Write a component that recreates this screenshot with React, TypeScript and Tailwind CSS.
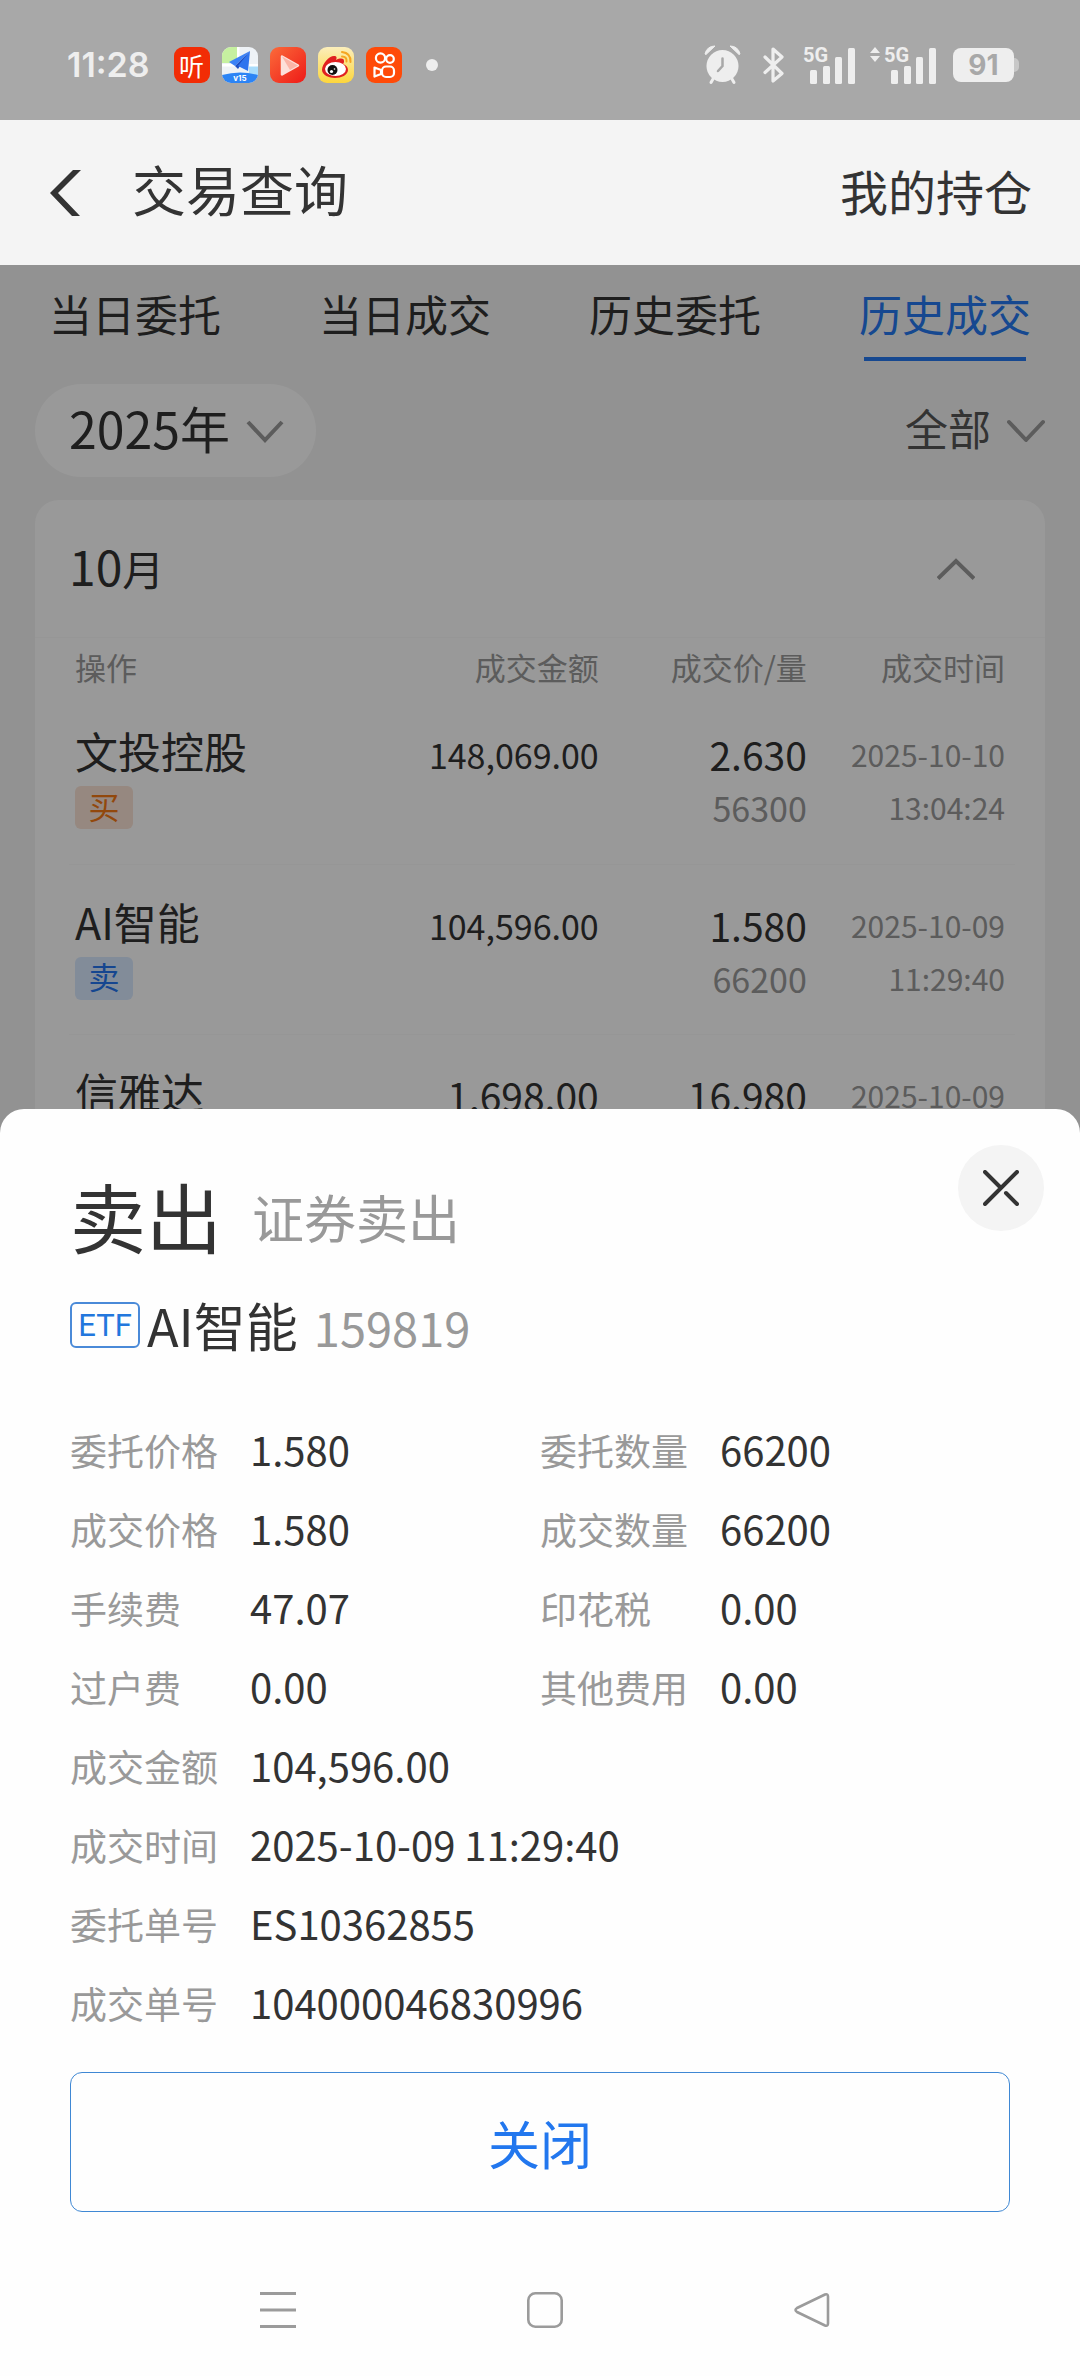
import { useState } from 'react'
import type { ReactNode } from 'react'

interface ITrade {
  id: number
  name: string
  side: 'buy' | 'sell'
  amount: string
  largeAmount?: boolean
  price: string
  quantity: string
  date: string
  time: string
}

interface IDetail {
  label: string
  value: string
  wide?: boolean
}

const TABS = ['当日委托', '当日成交', '历史委托', '历史成交']

const TRADES: ITrade[] = [
  {
    id: 1,
    name: '文投控股',
    side: 'buy',
    amount: '148,069.00',
    price: '2.630',
    quantity: '56300',
    date: '2025-10-10',
    time: '13:04:24',
  },
  {
    id: 2,
    name: 'AI智能',
    side: 'sell',
    amount: '104,596.00',
    price: '1.580',
    quantity: '66200',
    date: '2025-10-09',
    time: '11:29:40',
  },
  {
    id: 3,
    name: '信雅达',
    side: 'sell',
    amount: '1,698.00',
    largeAmount: true,
    price: '16.980',
    quantity: '100',
    date: '2025-10-09',
    time: '11:29:40',
  },
]

const DETAILS: IDetail[] = [
  { label: '委托价格', value: '1.580' },
  { label: '委托数量', value: '66200' },
  { label: '成交价格', value: '1.580' },
  { label: '成交数量', value: '66200' },
  { label: '手续费', value: '47.07' },
  { label: '印花税', value: '0.00' },
  { label: '过户费', value: '0.00' },
  { label: '其他费用', value: '0.00' },
  { label: '成交金额', value: '104,596.00', wide: true },
  { label: '成交时间', value: '2025-10-09 11:29:40', wide: true },
  { label: '委托单号', value: 'ES10362855', wide: true },
  { label: '成交单号', value: '104000046830996', wide: true },
]

// status bar
function AppIcons() {
  return (
    <div className="flex gap-3">
      <span className="flex h-9 w-9 items-center justify-center rounded-[9px] bg-[#f22c05] text-[25px] leading-9 text-white">
        听
      </span>
      <svg className="h-9 w-9 rounded-[9px]" viewBox="0 0 36 36" aria-hidden="true">
        <rect width="36" height="36" fill="#eef2f6" />
        <path d="M0 0h15v16H0z" fill="#c6f0a0" />
        <path d="M27 19h9v10h-9z" fill="#a9dcfb" />
        <path d="M15 0h2.500v17H36v2.500H0V17h15z" fill="#fff" />
        <path d="M28 4 7 15l6 4z" fill="#3b82f6" />
        <path d="M28 4 13 19l3 3z" fill="#1d4fc4" />
        <path d="M28 4 16 19l10 5z" fill="#2f74ee" />
        <path d="M0 28q18-5 36 0v8H0z" fill="#2c84f5" />
        <text x="18" y="34" textAnchor="middle" fontSize="8" fontWeight="700" fill="#fff" fontFamily="Inter, sans-serif">
          v15
        </text>
      </svg>
      <svg className="h-9 w-9 rounded-[9px]" viewBox="0 0 36 36" aria-hidden="true">
        <defs>
          <linearGradient id="play-bg" x1="0" y1="0" x2="1" y2="1">
            <stop offset="0" stopColor="#fb6b3a" />
            <stop offset="1" stopColor="#ee1a18" />
          </linearGradient>
        </defs>
        <rect width="36" height="36" fill="url(#play-bg)" />
        <path d="M12 9.500 28 18.500 12 27.500z" fill="#fde0da" stroke="#fde0da" strokeWidth="2.500" strokeLinejoin="round" />
        <path d="M12 9.500 28 18.500 20 23z" fill="#fbb5a8" />
      </svg>
      <svg className="h-9 w-9 rounded-[9px]" viewBox="0 0 36 36" aria-hidden="true">
        <defs>
          <linearGradient id="weibo-bg" x1="0" y1="0" x2="0" y2="1">
            <stop offset="0" stopColor="#fbeebb" />
            <stop offset="1" stopColor="#fdd63c" />
          </linearGradient>
        </defs>
        <rect width="36" height="36" fill="url(#weibo-bg)" />
        <path
          d="M4 23C4 17 11 9 16 9c3 0 3 2 2 4 4-2 8-2 8 1 0 1 0 2-1 3 3 1 5 3 5 6 0 5-7 8-13 8S4 28 4 23z"
          fill="#e02020"
        />
        <ellipse cx="17.500" cy="22" rx="10.500" ry="7" fill="#fff" />
        <circle cx="14.500" cy="23" r="5" fill="#111" />
        <circle cx="13.500" cy="24.500" r="1.600" fill="#fff" />
        <circle cx="16.500" cy="22" r=".8" fill="#fff" />
        <path d="M24 5q9 1 8.500 10M24 9.500q5 0 4.500 5" fill="none" stroke="#f5a623" strokeWidth="2" strokeLinecap="round" />
      </svg>
      <svg className="h-9 w-9 rounded-[9px]" viewBox="0 0 36 36" aria-hidden="true">
        <rect width="36" height="36" fill="#ff4a08" />
        <g fill="none" stroke="#fff" strokeWidth="2.200" strokeLinejoin="round">
          <circle cx="14.500" cy="11" r="4.600" />
          <circle cx="24" cy="12" r="3.800" />
          <rect x="16" y="19.500" width="12" height="10.500" rx="4" />
          <path d="M8.500 20.500 15 23v4l-6.500 2.500z" />
        </g>
      </svg>
    </div>
  )
}

function Signal({ active = false }: { active?: boolean }) {
  return (
    <svg
      className={active ? 'h-[38px] w-[67px] overflow-visible' : 'h-[38px] w-[53px] overflow-visible'}
      viewBox={active ? '0 0 67 38' : '12 0 53 38'}
      fill="#eee"
      aria-hidden="true"
    >
      {active && <path d="M5 1 10 7H0zM5 16l5-6H0z" />}
      <text x="14" y="16" fontSize="20" fontWeight="700" fontFamily="Roboto, sans-serif">
        5G
      </text>
      <rect x="21" y="24" width="7" height="14" rx="1.500" />
      <rect x="34" y="20" width="7" height="18" rx="1.500" />
      <rect x="46" y="11" width="7" height="27" rx="1.500" />
      <rect x="59" y="2" width="7" height="36" rx="1.500" />
    </svg>
  )
}

function StatusBar() {
  return (
    <div className="flex h-[120px] items-center justify-between bg-[#a8a8a8] pt-[10px] pr-[61px] pl-[67px] text-[#eee]">
      <div className="flex items-center gap-6">
        <span className="font-[Inter,sans-serif] text-[34px] leading-9 font-semibold">11:28</span>
        <AppIcons />
        <span className="h-3 w-3 rounded-full bg-[#eee]" />
      </div>
      <div className="flex items-center gap-4">
        <svg className="h-10 w-[42px]" viewBox="0 0 42 40" aria-hidden="true">
          <circle cx="18.500" cy="21" r="16" fill="#eee" />
          <path d="M1 9Q3 1 11 1L2 9.500zM36 9Q34 1 26 1l9 8.500z" fill="#eee" stroke="#eee" strokeLinejoin="round" />
          <path d="m9 34-2 3.500M28 34l2 3.500" stroke="#eee" strokeWidth="3" strokeLinecap="round" />
          <path d="M18.500 13.500V21l-4.500 5" fill="none" stroke="#a8a8a8" strokeWidth="2.500" strokeLinecap="round" />
        </svg>
        <svg
          className="h-9 w-[23px]"
          viewBox="0 0 23 36"
          fill="none"
          stroke="#eee"
          strokeWidth="3.200"
          strokeLinejoin="round"
          strokeLinecap="round"
          aria-hidden="true"
        >
          <path d="M3 10 20 26.500 11 34V2l9 8L3 25.500" />
        </svg>
        <Signal />
        <Signal active />
        <div className="flex items-center">
          <span className="flex h-[34px] w-[61px] items-center justify-center rounded-lg bg-[#eee] font-[Inter,sans-serif] text-[28px] leading-[34px] font-bold text-[#a8a8a8]">
            91
          </span>
          <span className="h-[14px] w-[5px] rounded-r-full bg-[#c8c8c8]" />
        </div>
      </div>
    </div>
  )
}

// icons
function Chevron({ up = false, round = false }: { up?: boolean; round?: boolean }) {
  return (
    <svg
      className="pointer-events-none h-6 w-[38px]"
      viewBox="0 0 38 24"
      fill="none"
      stroke="#999"
      strokeWidth="4"
      strokeLinecap={round ? 'round' : 'butt'}
      strokeLinejoin={round ? 'round' : 'miter'}
      aria-hidden="true"
    >
      <path d={up ? 'M1 21.500 19 4l18 17.500' : 'M2 3 19 21 36 3'} />
    </svg>
  )
}

function Filter({ label, children }: { label: string; children: ReactNode }) {
  return (
    <label className="flex items-center gap-4">
      <span className="sr-only">{label}</span>
      {children}
    </label>
  )
}

function TradeTable({ records }: { records: ITrade[] }) {
  return (
    <table className="w-full table-fixed text-right">
      <thead>
        <tr className="h-14 text-[31px] leading-[50px] text-[#999]">
          <th className="w-[28%] pt-[2px] pl-[6px] text-left font-normal">操作</th>
          <th className="w-[28%] pt-[2px] font-normal">成交金额</th>
          <th className="w-[22%] pt-[2px] font-normal">成交价/量</th>
          <th className="w-[22%] pt-[2px] pr-[10px] font-normal">成交时间</th>
        </tr>
      </thead>
      <tbody>
        {records.map((trade) => (
          <tr key={trade.id} className="h-[170px] border-b border-[#fafafa] align-top leading-[53px]">
            <td className="pt-[30px] pl-[6px] text-left">
              <div className="text-[43px] whitespace-nowrap">{trade.name}</div>
              <span
                className={`mt-[9px] flex h-[43px] w-[58px] items-center justify-center rounded-md pb-1 text-[31px] leading-[38px] ${
                  trade.side === 'buy' ? 'bg-[#fbe3d5] text-[#f37814]' : 'bg-[#d9e9ff] text-[#2375f0]'
                }`}
              >
                {trade.side === 'buy' ? '买' : '卖'}
              </span>
            </td>
            <td className={`pt-[34px] ${trade.largeAmount ? 'text-[39px]' : 'text-[34px]'}`}>{trade.amount}</td>
            <td className="pt-[34px]">
              <div className="text-[39px]">{trade.price}</div>
              <div className="text-[34px] text-[#999]">{trade.quantity}</div>
            </td>
            <td className="pt-[34px] pr-[10px] text-[30px] text-[#999]">
              <div>{trade.date}</div>
              <div>{trade.time}</div>
            </td>
          </tr>
        ))}
      </tbody>
    </table>
  )
}

function DetailSheet({ onClose }: { onClose: () => void }) {
  return (
    <section
      role="dialog"
      aria-label="卖出"
      className="absolute inset-x-0 bottom-0 rounded-t-3xl bg-[#fefefe] text-[#333]"
    >
      <div className="flex items-start justify-between pt-9 pr-9 pl-[70px]">
        <div className="mt-8 flex items-center gap-[30px] leading-[76px]">
          <h2 className="text-[76px]">卖出</h2>
          <span className="pt-1 text-[52px] leading-[72px] text-[#999]">证券卖出</span>
        </div>
        <button
          type="button"
          aria-label="关闭详情"
          onClick={onClose}
          className="flex h-[86px] w-[86px] items-center justify-center rounded-full bg-[#f4f4f4]"
        >
          <svg className="h-9 w-9" viewBox="0 0 36 36" stroke="#333" strokeWidth="4" strokeLinecap="round" aria-hidden="true">
            <path d="M34 2 2 34M2 2l15 15M23 23l11 11" />
          </svg>
        </button>
      </div>

      <div className="px-[70px]">
        <div className="mt-10 flex h-16 items-center leading-[60px]">
          <span className="mr-[7px] flex h-[46px] w-[70px] items-center justify-center rounded-md border-2 border-[#4a8ad8] pt-[2px] font-[Roboto,sans-serif] text-[31px] text-[#2277dd]">
            ETF
          </span>
          <span className="mr-4 text-[52px]">AI智能</span>
          <span className="pt-1 text-[47px] text-[#999]">159819</span>
        </div>

        <dl className="mt-[53px] grid grid-cols-2">
          {DETAILS.map(({ label, value, wide }) => (
            <div key={label} className={`flex h-[79px] items-center ${wide ? 'col-span-2' : ''}`}>
              <dt className="w-[180px] pt-[2px] text-[37px] text-[#999]">{label}</dt>
              <dd className="pb-[2px] text-[40px]">{value}</dd>
            </div>
          ))}
        </dl>

        <button
          type="button"
          onClick={onClose}
          className="mt-[30px] h-[140px] w-full rounded-xl border border-[#3f88d4] pt-[2px] text-[52px] text-[#2277ee]"
        >
          关闭
        </button>
      </div>

      <nav className="flex items-center justify-between pt-20 pr-[250px] pb-12 pl-[260px]">
        <button type="button" aria-label="最近任务">
          <svg className="h-9 w-9" viewBox="0 0 36 36" stroke="#9b9b9b" strokeWidth="3" aria-hidden="true">
            <path d="M0 1.500h36M0 18h36M0 34.500h36" />
          </svg>
        </button>
        <button type="button" aria-label="主屏幕">
          <svg className="h-9 w-9" viewBox="0 0 36 36" fill="none" stroke="#9b9b9b" strokeWidth="2.600" aria-hidden="true">
            <rect x="1.300" y="1.300" width="33.400" height="33.400" rx="7" />
          </svg>
        </button>
        <button type="button" aria-label="返回上一页">
          <svg
            className="h-9 w-9"
            viewBox="0 0 36 36"
            fill="none"
            stroke="#9b9b9b"
            strokeWidth="2.600"
            strokeLinejoin="round"
            aria-hidden="true"
          >
            <path d="M31 2.500 3 16q-3 2 0 4l28 13.500q3 1 3-2V4.500q0-3-3-2z" />
          </svg>
        </button>
      </nav>
    </section>
  )
}

export default function App() {
  // State
  const [activeTab, setActiveTab] = useState('历史成交')
  const [isOpen, setIsOpen] = useState(true)

  // UI
  return (
    <div
      lang="zh-CN"
      className="relative flex min-h-screen flex-col bg-[#f4f4f4] font-['Noto_Sans_CJK_SC',sans-serif] text-[#333]"
    >
      <StatusBar />
      <header className="flex h-[145px] items-center justify-between pr-12 pl-[50px]">
        <div className="flex items-center gap-[50px]">
          <button type="button" aria-label="返回">
            <svg className="h-[46px] w-8" viewBox="0 0 32 46" fill="#333" aria-hidden="true">
              <path d="M0 23 23 0h8L8 23l22 23h-8z" />
            </svg>
          </button>
          <h1 className="pb-2 text-[54px] leading-[60px]">交易查询</h1>
        </div>
        <a href="#positions" className="pb-[6px] text-[48px] leading-[60px]">
          我的持仓
        </a>
      </header>

      <main className="relative grow">
        <div className="grid grid-cols-4">
          {TABS.map((tab) => (
            <button
              key={tab}
              type="button"
              onClick={() => setActiveTab(tab)}
              className={`flex flex-col items-center pt-4 text-[43px] leading-[64px] ${
                tab === activeTab ? 'text-[#2578f0]' : ''
              }`}
            >
              {tab}
              <span className={`mt-3 h-1 w-3/5 ${tab === activeTab ? 'bg-[#2578f0]' : ''}`} />
            </button>
          ))}
        </div>

        <div className="px-[35px] pt-[23px]">
          <div className="flex items-center justify-between">
            <div className="rounded-full bg-white pr-8 pl-[34px]">
              <Filter label="年份">
                <select className="h-[93px] appearance-none pb-[6px] text-[50px]">
                  <option>2025年</option>
                </select>
                <Chevron />
              </Filter>
            </div>
            <Filter label="类型">
              <select className="h-[93px] appearance-none pb-[6px] text-[43px] text-[#555]">
                <option>全部</option>
              </select>
              <Chevron round />
            </Filter>
          </div>

          <section className="mt-[23px] rounded-t-3xl bg-white">
            <button
              type="button"
              className="flex h-[138px] w-full items-center justify-between border-b border-[#fafafa] pr-[70px] pl-[34px]"
            >
              <span className="pb-1 text-[42px] leading-[60px]">
                <span className="text-[48px]">10</span>月
              </span>
              <Chevron up />
            </button>
            <div className="pr-[30px] pl-[34px]">
              <TradeTable records={TRADES} />
            </div>
          </section>
        </div>
        {isOpen && <div className="absolute inset-0 bg-black/40" />}
      </main>

      {isOpen && <DetailSheet onClose={() => setIsOpen(false)} />}
    </div>
  )
}
